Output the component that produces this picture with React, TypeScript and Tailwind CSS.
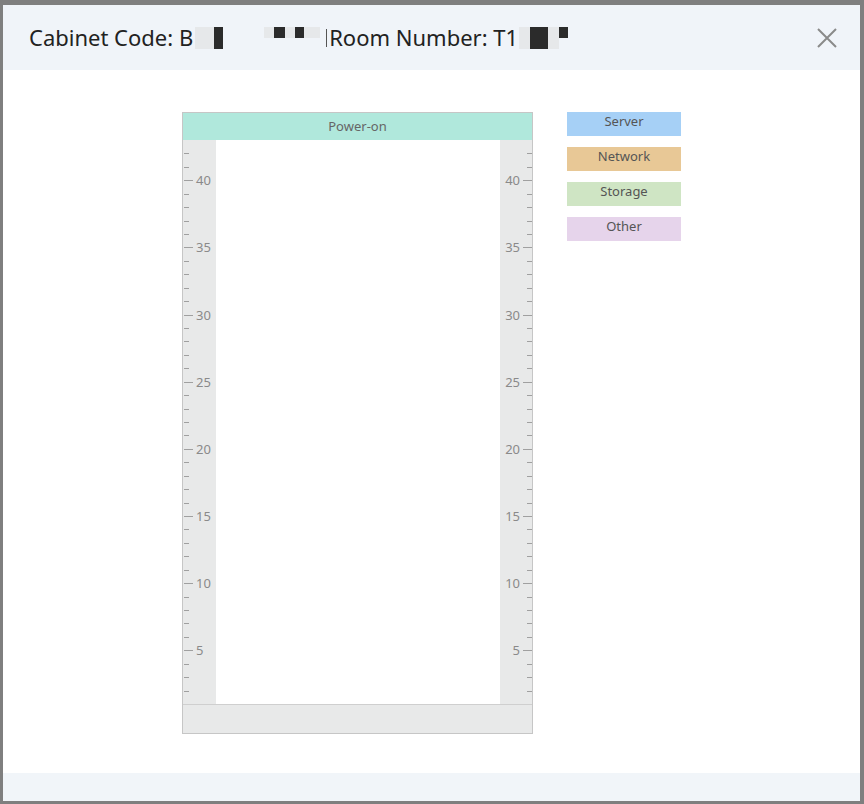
import React from 'react';

const UNIT = 564 / 42;
const ticks = Array.from({ length: 41 }, (_, i) => {
  const k = i + 1;
  return { y: k * UNIT, value: 43 - k };
});

const legend = [
  { label: 'Server', bg: 'bg-[#a6d0f6]' },
  { label: 'Network', bg: 'bg-[#e8c896]' },
  { label: 'Storage', bg: 'bg-[#cfe5c4]' },
  { label: 'Other', bg: 'bg-[#e6d4eb]' },
];

const Rail: React.FC<{ side: 'left' | 'right' }> = ({ side }) => {
  const w = side === 'left' ? 33 : 32;
  return (
    <div className={side === 'left' ? 'w-[33px] bg-[#e8e9e9]' : 'w-[32px] bg-[#e8e9e9]'}>
      <svg width={w} height={564} className="block">
        {ticks.map((t) => {
          const major = t.value % 5 === 0;
          const y = Math.round(t.y) + 0.5;
          if (side === 'left') {
            return (
              <g key={t.value}>
                <line x1={1} x2={major ? 10 : 6} y1={y} y2={y} stroke="#a0a0a0" strokeWidth={1} />
                {major && (
                  <text x={13} y={y + 4.5} fontSize={13} fill="#8a8a8a" fontFamily="'Noto Sans', sans-serif">
                    {t.value}
                  </text>
                )}
              </g>
            );
          }
          return (
            <g key={t.value}>
              <line x1={major ? 23 : 27} x2={32} y1={y} y2={y} stroke="#a0a0a0" strokeWidth={1} />
              {major && (
                <text x={20} y={y + 4.5} fontSize={13} fill="#8a8a8a" textAnchor="end" fontFamily="'Noto Sans', sans-serif">
                  {t.value}
                </text>
              )}
            </g>
          );
        })}
      </svg>
    </div>
  );
};

// blurred bits of the title, drawn as mosaic blocks
const Mosaic: React.FC<{ className?: string; blocks: { w: number; dark: boolean; top?: boolean }[] }> = ({
  className,
  blocks,
}) => (
  <span className={'flex h-[22px] items-start ' + (className ?? '')}>
    {blocks.map((b, i) => (
      <span
        key={i}
        className={
          (b.dark ? 'bg-[#2b2b2b] ' : 'bg-[#e6e8ea] ') + (b.top ? 'h-[11px]' : 'h-[22px]')
        }
        style={{ width: b.w }}
      />
    ))}
  </span>
);

export default function App() {
  return (
    <div
      className="w-[864px] h-[804px] bg-[#7f7f7f] pt-[5px] pl-[3px] pr-[4px] pb-[3px]"
      style={{ fontFamily: "'Noto Sans', 'Noto Sans CJK SC', sans-serif" }}
    >
      <div className="flex h-full flex-col bg-white">
        {/* header */}
        <div className="flex h-[65px] items-center justify-between bg-[#f0f4f9] pl-[26px] pr-[22px]">
          <div className="flex items-center text-[22px] text-[#222]">
            <span>Cabinet Code: B</span>
            <Mosaic className="ml-[2px]" blocks={[{ w: 10, dark: false }, { w: 9, dark: false }, { w: 9, dark: true }]} />
            <Mosaic
              className="ml-[41px]"
              blocks={[
                { w: 10, dark: false, top: true },
                { w: 11, dark: true, top: true },
                { w: 10, dark: false, top: true },
                { w: 9, dark: true, top: true },
                { w: 16, dark: false, top: true },
              ]}
            />
            <span className="ml-[6px] h-[18px] w-[1px] bg-[#555]" />
            <span className="ml-[2px]">Room Number: T1</span>
            <Mosaic
              className="ml-[1px]"
              blocks={[{ w: 11, dark: false }, { w: 18, dark: true }, { w: 11, dark: false }, { w: 9, dark: true, top: true }]}
            />
          </div>
          <button className="flex h-[22px] w-[22px] items-center justify-center">
            <svg width="20" height="20" viewBox="0 0 20 20">
              <path d="M1 1 L19 19 M19 1 L1 19" stroke="#8a8a8a" strokeWidth="2" />
            </svg>
          </button>
        </div>

        {/* body */}
        <div className="flex flex-1 items-start pl-[179px] pt-[42px]">
          <div className="w-[351px] border border-[#c6c6c6]">
            <div className="h-[27px] bg-[#b0e8dc] text-center text-[13px] leading-[27px] text-[#666]">
              Power-on
            </div>
            <div className="flex h-[564px]">
              <Rail side="left" />
              <div className="flex-1 bg-white" />
              <Rail side="right" />
            </div>
            <div className="h-[29px] border-t border-[#cfcfcf] bg-[#e8e9e9]" />
          </div>

          <div className="ml-[34px] flex flex-col gap-[11px]">
            {legend.map((l) => (
              <div
                key={l.label}
                className={l.bg + ' h-[24px] w-[114px] text-center text-[13px] leading-[19px] text-[#555]'}
              >
                {l.label}
              </div>
            ))}
          </div>
        </div>

        {/* footer */}
        <div className="h-[28px] bg-[#f1f5f9]" />
      </div>
    </div>
  );
}
